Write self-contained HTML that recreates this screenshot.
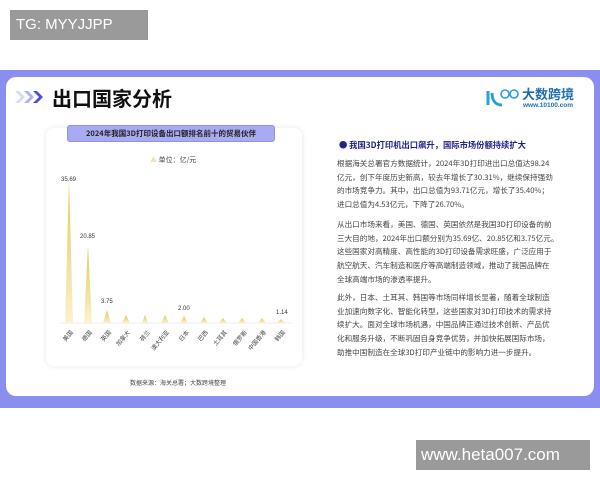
<!DOCTYPE html>
<html><head><meta charset="utf-8"><style>
*{margin:0;padding:0;box-sizing:border-box}
body{width:600px;height:480px;background:#fff;position:relative;overflow:hidden;font-family:"Liberation Sans","Noto Sans CJK SC",sans-serif}
.abs{position:absolute}
.tg{left:10px;top:10px;width:138px;height:30px;background:#9a9a9a;color:#fff;font-size:15px;line-height:30px;padding-left:6px}
.band{left:0;top:70px;width:600px;height:338px;background:#8a8ef0}
.card{left:6px;top:77px;width:588px;height:319px;background:#fff;border-radius:10px}
.title{left:52px;top:83px;font-size:20px;font-weight:bold;color:#111;font-family:"Noto Sans CJK SC",sans-serif}
.chart{left:46px;top:128px;width:256px;height:238px;background:#fff;border-radius:8px;box-shadow:0 0 6px rgba(0,0,0,0.10)}
.pill{left:67px;top:125px;width:208px;height:17px;background:#a9abf2;border:1px solid #8f92e8;border-radius:3px;font-size:7.5px;font-weight:bold;color:#222;text-align:center;line-height:16px;font-family:"Noto Sans CJK SC",sans-serif}
.t{font-size:7.6px;color:#444;line-height:13.7px;font-family:"Noto Sans CJK SC",sans-serif;white-space:nowrap}
.lbl{font-size:6px;color:#444;font-family:"Noto Sans CJK SC",sans-serif;transform:rotate(-50deg);transform-origin:right top;white-space:nowrap}
</style></head><body>
<div class="abs tg">TG: MYYJJPP</div>
<div class="abs band"></div>
<div class="abs card"></div>
<svg class="abs" style="left:14px;top:90px" width="34" height="14"><path d="M1 1l6 6-6 6h4l6-6-6-6z" fill="#d8d9f8"/><path d="M10 1l6 6-6 6h4l6-6-6-6z" fill="#aeb0f0"/><path d="M19 1l6 6-6 6h4l6-6-6-6z" fill="#4d50d8"/></svg>
<div class="abs title">出口国家分析</div>
<div class="abs chart"></div>
<div class="abs pill">2024年我国3D打印设备出口额排名前十的贸易伙伴</div>
<div class="abs" style="left:150px;top:155px;font-size:7px;color:#444;font-family:'Noto Sans CJK SC',sans-serif"><span style="color:#efe4b0">▲</span> 单位：亿/元</div>
<svg class="abs" style="left:46px;top:170px" width="260" height="160">
<defs><linearGradient id="g" x1="0" y1="0" x2="0" y2="1"><stop offset="0" stop-color="#e2c850"/><stop offset="1" stop-color="#faf2d0"/></linearGradient></defs>
<line x1="14" y1="153" x2="246" y2="153" stroke="#ececec"/>
<path d="M19 153L23 10L27 153Z" fill="url(#g)"/>
<path d="M38 153L42 75L46 153Z" fill="url(#g)"/>
<path d="M57 153L61 140L65 153Z" fill="url(#g)"/>
<path d="M76 153L80 145L84 153Z" fill="url(#g)"/>
<path d="M96 153L99 145L102 153Z" fill="url(#g)"/>
<path d="M115 153L119 145L123 153Z" fill="url(#g)"/>
<path d="M134 153L138 146L142 153Z" fill="url(#g)"/>
<path d="M154 153L158 147L162 153Z" fill="url(#g)"/>
<path d="M173 153L177 148L181 153Z" fill="url(#g)"/>
<path d="M192 153L196 148L200 153Z" fill="url(#g)"/>
<path d="M212 153L216 148L220 153Z" fill="url(#g)"/>
<path d="M231 153L235 149L239 153Z" fill="url(#g)"/>
<text x="15" y="11" font-size="6" fill="#333" font-family="Liberation Sans">35.69</text>
<text x="34" y="68" font-size="6" fill="#333" font-family="Liberation Sans">20.85</text>
<text x="55" y="133" font-size="6" fill="#333" font-family="Liberation Sans">3.75</text>
<text x="132" y="140" font-size="6" fill="#333" font-family="Liberation Sans">2.00</text>
<text x="230" y="144" font-size="6" fill="#333" font-family="Liberation Sans">1.14</text>
</svg>
<div class="abs lbl" style="right:532px;top:328px">美国</div>
<div class="abs lbl" style="right:513px;top:328px">德国</div>
<div class="abs lbl" style="right:494px;top:328px">英国</div>
<div class="abs lbl" style="right:475px;top:328px">加拿大</div>
<div class="abs lbl" style="right:455px;top:328px">荷兰</div>
<div class="abs lbl" style="right:436px;top:328px">澳大利亚</div>
<div class="abs lbl" style="right:416px;top:328px">日本</div>
<div class="abs lbl" style="right:397px;top:328px">巴西</div>
<div class="abs lbl" style="right:378px;top:328px">土耳其</div>
<div class="abs lbl" style="right:358px;top:328px">俄罗斯</div>
<div class="abs lbl" style="right:339px;top:328px">中国香港</div>
<div class="abs lbl" style="right:320px;top:328px">韩国</div>
<div class="abs" style="left:130px;top:378px;font-size:6px;color:#444;font-family:'Noto Sans CJK SC',sans-serif">数据来源：海关总署；大数跨境整理</div>
<svg class="abs" style="left:484px;top:87px" width="40" height="22"><path d="M4 4v14" stroke="#2aa0d8" stroke-width="3"/><path d="M8 6c0 8 4 12 10 12" stroke="#2aa0d8" stroke-width="3" fill="none"/><circle cx="21" cy="7" r="4" stroke="#2aa0d8" stroke-width="1.6" fill="none"/><circle cx="30" cy="7" r="4" stroke="#2aa0d8" stroke-width="1.6" fill="none"/></svg>
<div class="abs" style="left:522px;top:84px;font-size:13px;font-weight:bold;color:#1f6fb0;font-family:'Noto Sans CJK SC',sans-serif">大数跨境</div>
<div class="abs" style="left:523px;top:102px;font-size:6.5px;font-weight:bold;color:#1f6fb0">www.10100.com</div>
<div class="abs" style="left:339px;top:139px;font-size:8.3px;font-weight:bold;color:#22228a;font-family:'Noto Sans CJK SC',sans-serif">● 我国3D打印机出口飙升，国际市场份额持续扩大</div>
<div class="abs t" style="left:337px;top:157px">根据海关总署官方数据统计，2024年3D打印进出口总值达98.24<br>亿元，创下年度历史新高，较去年增长了30.31%，继续保持强劲<br>的市场竞争力。其中，出口总值为93.71亿元，增长了35.40%；<br>进口总值为4.53亿元，下降了26.70%。</div>
<div class="abs t" style="left:337px;top:218px">从出口市场来看，美国、德国、英国依然是我国3D打印设备的前<br>三大目的地，2024年出口额分别为35.69亿、20.85亿和3.75亿元。<br>这些国家对高精度、高性能的3D打印设备需求旺盛，广泛应用于<br>航空航天、汽车制造和医疗等高端制造领域，推动了我国品牌在<br>全球高端市场的渗透率提升。</div>
<div class="abs t" style="left:337px;top:291px">此外，日本、土耳其、韩国等市场同样增长显著，随着全球制造<br>业加速向数字化、智能化转型，这些国家对3D打印技术的需求持<br>续扩大。面对全球市场机遇，中国品牌正通过技术创新、产品优<br>化和服务升级，不断巩固自身竞争优势，并加快拓展国际市场，<br>助推中国制造在全球3D打印产业链中的影响力进一步提升。</div>
<div class="abs" style="left:416px;top:440px;width:174px;height:30px;background:#9a9a9a;color:#fff;font-size:17px;line-height:30px;padding-left:5px">www.heta007.com</div>
</body></html>
